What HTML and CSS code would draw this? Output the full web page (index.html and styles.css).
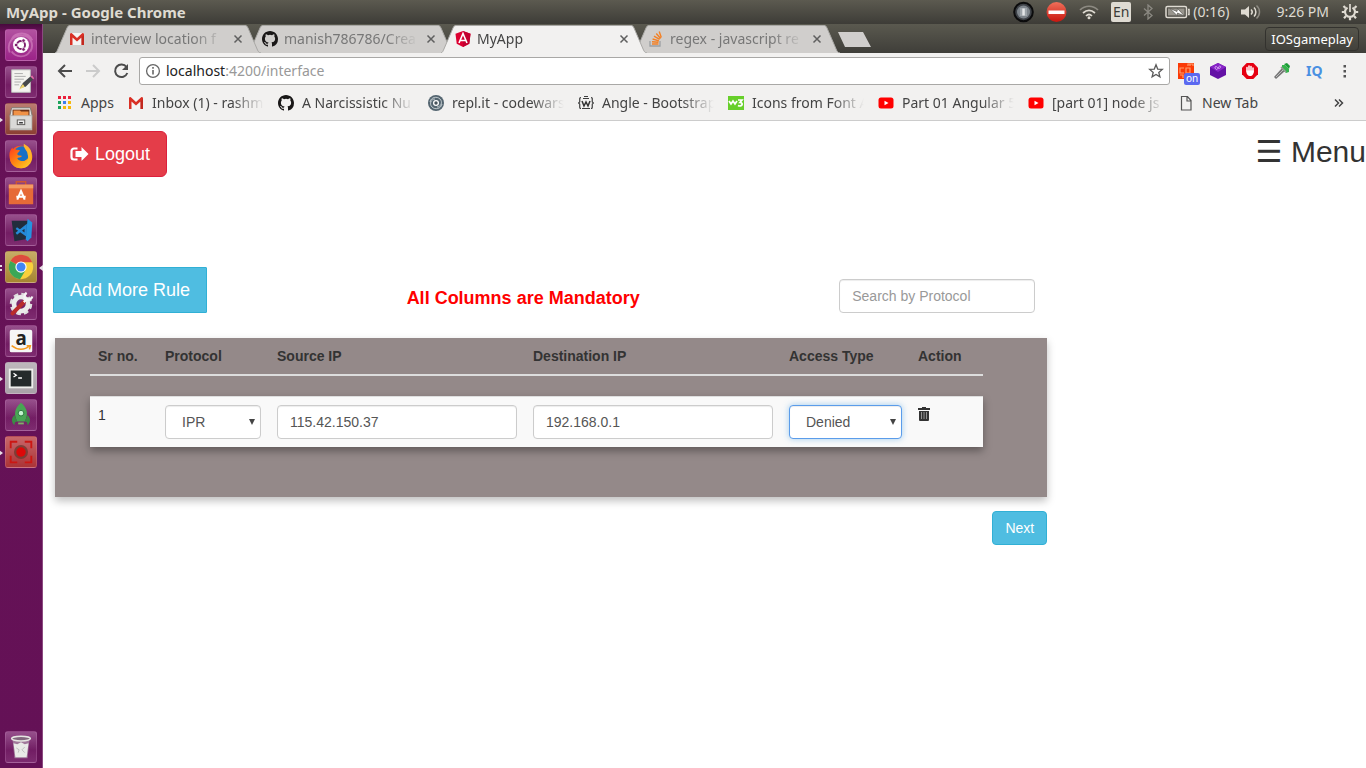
FILE: index.html
```html
<!DOCTYPE html>
<html lang="en">
<head>
<meta charset="utf-8">
<meta name="viewport" content="width=device-width, initial-scale=1">
<title>MyApp</title>
<link rel="stylesheet" href="styles.css">
</head>
<body>
<svg class="sprite" aria-hidden="true">
  <defs>
    <linearGradient id="fox" x1="0" y1="0" x2="1" y2="1"><stop offset="0" stop-color="#ff3b1f"/><stop offset=".5" stop-color="#ff8a12"/><stop offset="1" stop-color="#ffd52b"/></linearGradient>
    <linearGradient id="stop-red" x1="0" y1="0" x2="0" y2="1"><stop offset="0" stop-color="#f0705a"/><stop offset="1" stop-color="#c8160f"/></linearGradient>
  </defs>
  <symbol id="gmail" viewBox="0 0 16 16"><path fill="#f4f4f4" d="M1 2h14v12H1z"/><path fill="#d93025" d="M1 14V2.600L2.600 2 8 7l5.400-5 1.600.6V14h-2.500V6.400L8 10.600 3.500 6.400V14z"/><path fill="#b3231b" d="M12.500 6.400L15 4v10h-2.500z" opacity=".6"/></symbol>
  <symbol id="github" viewBox="0 0 16 16"><path fill="#191717" fill-rule="evenodd" d="M8 0C3.580 0 0 3.580 0 8c0 3.540 2.290 6.530 5.470 7.590.4.070.55-.17.55-.38 0-.19-.01-.82-.01-1.490-2.010.37-2.530-.49-2.690-.94-.09-.23-.48-.94-.82-1.130-.28-.15-.68-.52-.01-.53.63-.01 1.080.58 1.230.82.72 1.210 1.870.87 2.330.66.07-.52.28-.87.51-1.070-1.780-.2-3.640-.89-3.640-3.950 0-.87.31-1.590.82-2.150-.08-.2-.36-1.020.08-2.120 0 0 .67-.21 2.200.82a7.400 7.400 0 0 1 4 0c1.530-1.040 2.200-.82 2.200-.82.44 1.100.16 1.920.08 2.120.51.56.82 1.270.82 2.150 0 3.070-1.870 3.750-3.650 3.950.29.25.54.73.54 1.480 0 1.070-.01 1.930-.01 2.200 0 .21.15.46.55.38A8.010 8.010 0 0 0 16 8c0-4.420-3.580-8-8-8z"/></symbol>
  <symbol id="youtube" viewBox="0 0 16 16"><rect x=".5" y="2.500" width="15" height="11" rx="2.500" fill="#f00"/><path d="M6.500 5.700v4.600L10.500 8z" fill="#fff"/></symbol>
  <symbol id="close" viewBox="0 0 10 10"><path d="M1.500 1.500l7 7M8.500 1.500l-7 7" stroke="#5f5f5f" stroke-width="1.500"/></symbol>
  <symbol id="tab-shape" viewBox="0 0 206 28"><path d="M0 28C1.500 27.500 2 26 2.500 25L12 3C13 1 13.500.5 15 .5H190c1.500 0 2 .5 3 2.500l9.500 22c.5 1 1 2.500 3.500 3" fill="currentColor" stroke="#a9a8a5"/></symbol>
  <symbol id="marker" viewBox="0 0 4 6"><path d="M0 0l4 3-4 3z" fill="#e8dfe6"/></symbol>
  <symbol id="caret" viewBox="0 0 6 6"><path d="M0 0h6L3 6z" fill="#444"/></symbol>
</svg>

<header class="panel">
  <span class="panel-title">MyApp - Google Chrome</span>
  <div class="indicators">
    <svg width="21" height="22" viewBox="0 0 21 22"><circle cx="10.500" cy="11" r="9.300" fill="#3e4248" stroke="#0b0b0c" stroke-width="2"/><circle cx="10.500" cy="11" r="6.500" fill="#7e858c"/><path d="M7 7h7v8H7z" fill="#9da4aa"/><path d="M9.300 7.500h2.500v7H9.300z" fill="#e4e6e8"/></svg>
    <svg width="21" height="22" viewBox="0 0 21 22"><circle cx="10.500" cy="11" r="10" fill="url(#stop-red)"/><path d="M2.500 9.500h16v3.500h-16z" fill="#fff"/></svg>
    <svg width="20" height="16" viewBox="0 0 20 16" fill="none" stroke-width="1.700"><path d="M1 6C6 1 14 1 19 6" stroke="#8d8a82"/><path d="M4 9c4-3.500 8-3.500 12 0M7 12c2-2 4-2 6 0" stroke="#dfdbd2"/><circle cx="10" cy="13.800" r="1.500" fill="#dfdbd2"/></svg>
    <span class="lang">En</span>
    <svg width="10" height="16" viewBox="0 0 10 16"><path d="M1 4.500l8 7-4 3.500V1l4 3.500-8 7" fill="none" stroke="#8b8982" stroke-width="1.300"/></svg>
    <div class="battery">
      <svg width="25" height="14" viewBox="0 0 25 14"><rect x="1" y="1.500" width="20.500" height="11" rx="1.500" fill="none" stroke="#dfdbd2" stroke-width="1.500"/><path d="M3 3.500h16.500v7H3z" fill="#98958d"/><path d="M23 4.500h1v5h-1" fill="none" stroke="#dfdbd2" stroke-width="1.500"/><path d="M5 3.500l7 3 .5-3 7 7.500-7-3-.5 2.500z" fill="#fff" stroke="#44433d" stroke-width=".6"/></svg>
      <span>(0:16)</span>
    </div>
    <svg width="20" height="16" viewBox="0 0 20 16"><path d="M0 5.500h4L8 2v12l-4-3.500H0z" fill="#dfdbd2"/><g fill="none" stroke="#dfdbd2" stroke-width="1.500"><path d="M10 5.500c1.500 1.500 1.500 3.500 0 5M13 3.500c2.500 2.500 2.500 6.500 0 9"/><path d="M15.500 1.500c4 3.500 4 9.500 0 13" stroke="#8d8a82"/></g></svg>
    <time class="clock">9:26 PM</time>
    <svg width="18" height="18" viewBox="0 0 18 18" fill="none" stroke="#dfdbd2"><path d="M6.500 4.600a5 5 0 1 0 5 0" stroke-width="2.200"/><path d="M9 1v8" stroke-width="1.700"/><path d="M4.500 5L2.500 3M13.500 5l2-2M3.500 9H.8M14.500 9h2.700M5 13l-2 2.200M13 13l2 2.200M9 14.500v2.700" stroke-width="2.200"/></svg>
  </div>
</header>

<div class="desktop">
  <nav class="launcher" aria-label="Launcher">
    <button class="tile tile-dash" aria-label="Dash"><svg viewBox="0 0 32 32"><path d="M4 24C0 14 8 5 17 6c10 0 13 10 9 17M6 10c4-8 17-9 22 1M26 22c-5 9-16 7-20 1" fill="none" stroke="#d889c4" stroke-width="2" opacity=".6"/><circle cx="16" cy="16" r="8.500" fill="#fff"/><circle cx="16" cy="16" r="4.300" fill="none" stroke="#7c1d6c" stroke-width="2"/><g fill="#7c1d6c" stroke="#fff" stroke-width=".8"><circle cx="10.800" cy="16" r="1.900"/><circle cx="18.700" cy="11.300" r="1.900"/><circle cx="18.700" cy="20.700" r="1.900"/></g></svg></button>
    <button class="tile" aria-label="Text editor"><svg viewBox="0 0 32 32"><path d="M6 3h20v24H6z" fill="#f3f3ef" stroke="#bbb"/><path d="M9 7h9M9 10h12M9 13h10M9 16h7M9 19h5" stroke="#aaa"/><path d="M15 22l3-5 8-7 3 3-8 8z" fill="#45484b"/><path d="M14 24l4-6 2 3z" fill="#efd469"/><path d="M26 10l2-1 2 3-1 1z" fill="#e46ca7"/></svg></button>
    <button class="tile tile-files" aria-label="Files"><svg class="mark" viewBox="0 0 4 6"><use href="#marker"/></svg><svg viewBox="0 0 32 32"><path d="M6 4h20l2 9H4z" fill="#e3e1dd" stroke="#7b7772"/><path d="M7 6h18v7H7z" fill="#6b3115"/><path d="M8 7h7l1 1h8v5H8z" fill="#f09246"/><path d="M4 12h24v16H4z" fill="#b9b8b5"/><path d="M5 13h22v13H5z" fill="#dadad8"/><rect x="12" y="17" width="8" height="5" fill="#eee" stroke="#5c5a57"/><path d="M14 20h4" stroke="#333" stroke-width="1.500"/></svg></button>
    <button class="tile" aria-label="Firefox"><svg viewBox="0 0 32 32"><circle cx="16" cy="17" r="12" fill="url(#fox)"/><circle cx="17" cy="13.500" r="8" fill="#1770c8"/><path d="M4 17C3 12 5 9 7 7l1 4c2-2 5-2 7-1-1 2-3 2-3 4 1 2 4 1 5 2-1 2-4 1-5 3 3 4 11 4 14-3 2 7-3 13-10 13S4 24 4 17z" fill="url(#fox)"/><path d="M19 3c7 4 9 8 8 13-1 5-3 7-6 9 3-5 3-8 2-11 0-4-5-6-4-11z" fill="#ffb52c"/></svg></button>
    <button class="tile" aria-label="Software"><svg viewBox="0 0 32 32"><path d="M11 9V4h10v5" fill="none" stroke="#cf5631" stroke-width="1.500"/><path d="M3 7h26v21H3z" fill="#e66a37"/><path d="M3 7h26v4H3z" fill="#f49b62"/><path d="M12 23l4-9 4 9M11 20h10" fill="none" stroke="#fff" stroke-width="2.200"/></svg></button>
    <button class="tile" aria-label="Code editor"><svg viewBox="0 0 32 32"><path d="M6 6h19v19L9 28z" fill="#222d3d"/><path d="M23 4l5 4-1 16-4 4-2-2z" fill="#2593e0"/><path d="M11 20l10-8v9l-10-7" fill="none" stroke="#258ada" stroke-width="2.500"/></svg></button>
    <button class="tile tile-chrome" aria-label="Chrome"><svg class="mark" viewBox="0 0 4 6"><path d="M0 0h3v2H0zM0 4h3v2H0z" fill="#e8dfe6"/></svg><svg class="mark mark-active" viewBox="0 0 4 6"><path d="M4 0L0 3l4 3z" fill="#e8dfe6"/></svg><svg viewBox="0 0 32 32"><circle cx="16" cy="16" r="13" fill="#f9cf3b"/><path d="M16 16L4.700 9.500A13 13 0 0 1 28 11H16z" fill="#dd4b3e"/><path d="M16 16L4.700 9.500A13 13 0 0 0 15 29l5.500-9z" fill="#3aa757"/><circle cx="16" cy="16" r="6" fill="#fff"/><circle cx="16" cy="16" r="4.800" fill="#4285f4"/></svg></button>
    <button class="tile" aria-label="Settings"><svg viewBox="0 0 32 32"><circle cx="16" cy="16" r="10.500" fill="none" stroke="#dedede" stroke-width="3" stroke-dasharray="5 3.250"/><circle cx="16" cy="16" r="7.500" fill="none" stroke="#ebebeb" stroke-width="5"/><path d="M7 26l12-12" stroke="#b92c2c" stroke-width="4.500" stroke-linecap="round"/><path d="M19 14l4-4M22 4c-3 2-3 6 0 7s5 0 6-3" stroke="#f5f5f5" stroke-width="2.500" fill="none"/></svg></button>
    <button class="tile" aria-label="Amazon"><svg viewBox="0 0 32 32"><rect x="4" y="4" width="24" height="24" rx="2" fill="#f6f6f6"/><text x="16" y="20" text-anchor="middle" class="amazon-letter">a</text><path d="M6 21c6 5 14 5 19 0M22 21h4l-1 4" fill="none" stroke="#f49a20" stroke-width="1.600"/></svg></button>
    <button class="tile tile-terminal" aria-label="Terminal"><svg class="mark" viewBox="0 0 4 6"><use href="#marker"/></svg><svg viewBox="0 0 32 32"><path d="M3 6h26v21H3z" fill="#eeeeec"/><path d="M5 8h22v17H5z" fill="#242a2b"/><path d="M8 11l3 2-3 2M13 16h4" fill="none" stroke="#fff" stroke-width="1.400"/></svg></button>
    <button class="tile" aria-label="Rocket"><svg viewBox="0 0 32 32"><path d="M16 3c7 6 8 12 4 20h-8C8 15 9 9 16 3z" fill="#48a554"/><path d="M9 16c-4 4-3 8 0 11 0-3 1-4 3-4zM23 16c4 4 3 8 0 11 0-3-1-4-3-4z" fill="#3b8b45"/><circle cx="16" cy="14" r="3" fill="#c5f3d0" stroke="#27723a"/><path d="M13 25h6" stroke="#7eaf69" stroke-width="2"/></svg></button>
    <button class="tile tile-recorder" aria-label="Screen recorder"><svg class="mark" viewBox="0 0 4 6"><use href="#marker"/></svg><svg viewBox="0 0 32 32"><path d="M5 12V5h7M20 5h7v7M27 20v7h-7M12 27H5v-7" fill="none" stroke="#cb1713" stroke-width="2"/><circle cx="16" cy="16" r="7.500" fill="#71392f" opacity=".8"/><circle cx="16" cy="16" r="5" fill="#dd0808"/></svg></button>
    <button class="tile tile-trash" aria-label="Trash"><svg viewBox="0 0 32 32"><path d="M7 8h18l-2 20H9z" fill="#b7a9b5" opacity=".6"/><path d="M8 12l4 1 4-2 4 2 4-1-2 15H10z" fill="#e9e9e7"/><path d="M11 17l3 2-1 3M20 16l-3 3 3 3" fill="none" stroke="#bbb"/><ellipse cx="16" cy="7" rx="10" ry="2.500" fill="#82667d" stroke="#e6e6e2" stroke-width="1.600"/></svg></button>
  </nav>

  <div class="window">
    <div class="tabstrip">
      <div class="tab tab-1"><svg class="tab-bg"><use href="#tab-shape"/></svg><svg class="icon"><use href="#gmail"/></svg><span class="tab-title fade">interview location f</span><button class="tab-close" aria-label="Close tab"><svg><use href="#close"/></svg></button></div>
      <div class="tab"><svg class="tab-bg"><use href="#tab-shape"/></svg><svg class="icon"><use href="#github"/></svg><span class="tab-title fade">manish786786/Crea</span><button class="tab-close" aria-label="Close tab"><svg><use href="#close"/></svg></button></div>
      <div class="tab tab-active"><svg class="tab-bg"><use href="#tab-shape"/></svg><svg class="icon" viewBox="0 0 16 16"><path d="M8 0l7.500 2.700-1.200 10L8 16l-6.300-3.300L.5 2.700z" fill="#dd0031"/><path d="M8 0l7.500 2.700-1.200 10L8 16z" fill="#c3002f"/><path d="M4 12l4-9.500L12 12M5.500 9.500h5" fill="none" stroke="#fff" stroke-width="1.600"/></svg><span class="tab-title fade">MyApp</span><button class="tab-close" aria-label="Close tab"><svg><use href="#close"/></svg></button></div>
      <div class="tab"><svg class="tab-bg"><use href="#tab-shape"/></svg><svg class="icon" viewBox="0 0 16 16"><path d="M2 10v5h10v-5" fill="none" stroke="#9b9fa3" stroke-width="1.300"/><path d="M4 13h6.500M4 10.700l6.500.6M4.600 8l6.300 1.800M6 5.200l5.600 3.200M8.300 2.500l4.300 5M11.200.5l2.100 6" stroke="#f48024" stroke-width="1.400"/></svg><span class="tab-title fade">regex - javascript re</span><button class="tab-close" aria-label="Close tab"><svg><use href="#close"/></svg></button></div>
      <button class="new-tab" aria-label="New tab"></button>
      <button class="profile">IOSgameplay</button>
    </div>

    <div class="toolbar">
      <div class="nav-buttons">
        <button aria-label="Back"><svg viewBox="0 0 16 16"><path d="M15 8H2M8 2L2 8l6 6" fill="none" stroke="#4c4c4c" stroke-width="2"/></svg></button>
        <button aria-label="Forward"><svg viewBox="0 0 16 16"><path d="M1 8h13M8 2l6 6-6 6" fill="none" stroke="#cbcbcb" stroke-width="2"/></svg></button>
        <button aria-label="Reload"><svg viewBox="0 0 16 16"><path d="M13.500 4A6.300 6.300 0 1 0 14.300 10" fill="none" stroke="#4c4c4c" stroke-width="2"/><path d="M15 1v6H9z" fill="#4c4c4c"/></svg></button>
      </div>
      <div class="omnibox">
        <svg class="info" viewBox="0 0 16 16"><circle cx="8" cy="8" r="6.400" fill="none" stroke="#666" stroke-width="1.300"/><path d="M8 7v4.500M8 4v1.700" stroke="#666" stroke-width="1.600"/></svg>
        <span class="url">localhost<span class="url-path">:4200/interface</span></span>
        <svg class="star" viewBox="0 0 16 16"><path d="M8 1.800l1.700 4.300 4.600.3-3.500 3 1.100 4.400L8 11.400l-3.900 2.400 1.100-4.400-3.500-3 4.600-.3z" fill="none" stroke="#5a5a5a" stroke-width="1.300"/></svg>
      </div>
      <div class="extensions">
        <button class="ext" aria-label="Extension"><svg viewBox="0 0 16 16"><path d="M0 0h16v16H0z" fill="#fb3a06"/><path d="M6 5H2v5h4M8 5h4v5H8zM10 3V1h5v2M12 1v2M2 12h3v3" fill="none" stroke="#ff9d6c" stroke-width="1.200"/></svg><span class="badge">on</span></button>
        <button class="ext" aria-label="Extension"><svg viewBox="0 0 16 16"><path d="M8 0l8 4v8l-8 4-8-4V4z" fill="#6411a5"/><path d="M8 0l8 4-8 5-8-5z" fill="#8825c7"/><path d="M5 4c2-2 3 3 5 1s-1-3-2 0-3 1-3-1z" fill="none" stroke="#d9a6f5"/></svg></button>
        <button class="ext" aria-label="Ad blocker"><svg viewBox="0 0 16 16"><path d="M4.700 0h6.600L16 4.700v6.600L11.300 16H4.700L0 11.300V4.700z" fill="#e60012"/><path d="M5 8V4.500M7 8V3M9 8V3.500M11 9V5" stroke="#fff" stroke-width="1.500" stroke-linecap="round"/><path d="M4.300 7.500h7.400C12 11 10.500 13 8 13 6 13 4.500 11 4.300 9z" fill="#fff"/></svg></button>
        <button class="ext" aria-label="Microphone"><svg viewBox="0 0 16 16"><path d="M0 14l8-9 3 3-9 8z" fill="#777"/><path d="M2 14l7-7" stroke="#bbb"/><path d="M10 1l3-1 3 3-1 3z" fill="#1c9b36"/><path d="M8 2h3l4 4v3l-3 1-4-4z" fill="#35b44b"/><path d="M7 4l5 5" stroke="#999" stroke-width="1.500"/></svg></button>
        <button class="ext ext-iq">IQ</button>
        <button class="ext" aria-label="Chrome menu"><svg viewBox="0 0 16 16"><path d="M5.500 2H8v2.500H5.500zM5.500 7H8v2.500H5.500zM5.500 12H8v2.500H5.500z" fill="#555"/></svg></button>
      </div>
    </div>

    <nav class="bookmarks" aria-label="Bookmarks">
      <a href="#" class="apps"><svg class="icon" viewBox="0 0 16 16"><path d="M1 1h3v3H1zM6 1h3v3H6zM11 1h3v3h-3z" fill="#ea1f3b"/><path d="M1 6h3v3H1zM1 11h3v3H1z" fill="#1ca35a"/><path d="M6 6h3v3H6z" fill="#3d7ef0"/><path d="M11 6h3v3h-3zM6 11h3v3H6zM11 11h3v3h-3z" fill="#f6b90c"/></svg><span>Apps</span></a>
      <a href="#"><svg class="icon"><use href="#gmail"/></svg><span class="fade">Inbox (1) - rashm</span></a>
      <a href="#"><svg class="icon"><use href="#github"/></svg><span class="fade">A Narcissistic Nu</span></a>
      <a href="#"><svg class="icon" viewBox="0 0 16 16"><circle cx="8" cy="8" r="8" fill="#546570"/><path d="M2 7c1-5 7-6 10-3M14 9c-1 5-7 6-10 3M12 4c3 3 1 8-3 8M4 12C1 9 3 4 7 4" fill="none" stroke="#dde3e6" stroke-width=".8"/><circle cx="8" cy="8" r="3" fill="#fff"/><circle cx="8" cy="8" r="1.700" fill="#47545c"/></svg><span class="fade">repl.it - codewars</span></a>
      <a href="#"><svg class="icon" viewBox="0 0 16 16"><path d="M3 2.500C1 2.500 2 5 1.700 7L.5 8l1.200 1C2 11 1 13.500 3 13.500M13 2.500c2 0 1 2.500 1.300 4.500l1.200 1-1.200 1c-.3 2 .7 4.500-1.300 4.500M5 3.500h6M6 1.500h4M4 13.500h8" fill="none" stroke="#3e3e3e" stroke-width="1.200"/><path d="M4 6l2 5 2-4 2 4 2-5" fill="none" stroke="#333" stroke-width="1.500"/></svg><span class="fade">Angle - Bootstrap</span></a>
      <a href="#"><svg class="icon" viewBox="0 0 16 16"><path d="M0 1h16v14H0z" fill="#67cf2a"/><path d="M1 6l2 3 2-3 2 3 2-3M10 5h4l-2 2.500c4 0 2 5-2 3" fill="none" stroke="#fff" stroke-width="1.700"/></svg><span class="fade">Icons from Font A</span></a>
      <a href="#"><svg class="icon"><use href="#youtube"/></svg><span class="fade">Part 01 Angular 5</span></a>
      <a href="#"><svg class="icon"><use href="#youtube"/></svg><span class="fade">[part 01] node js</span></a>
      <a href="#"><svg class="icon" viewBox="0 0 16 16"><path d="M3.500 1.500h6l3.500 4v9.500H3.500zM9 1.500V6h4" fill="none" stroke="#555" stroke-width="1.200"/></svg><span>New Tab</span></a>
      <button class="more" aria-label="More bookmarks"><svg viewBox="0 0 10 10"><path d="M1 1.500L4.500 5 1 8.500M5 1.500L8.500 5 5 8.500" fill="none" stroke="#444" stroke-width="1.500"/></svg></button>
    </nav>

    <main class="page">
      <div class="page-top">
        <button class="btn btn-danger btn-lg"><svg class="signout" viewBox="0 0 19 16"><path d="M7.500 2.500H4A2.500 2.500 0 0 0 1.500 5v6A2.500 2.500 0 0 0 4 13.500h3.500" fill="none" stroke="#fff" stroke-width="2.200"/><path d="M11.500 1l7 7-7 7v-4H5.500V5h6z" fill="#fff"/></svg>Logout</button>
        <button class="menu-toggle">☰ Menu</button>
      </div>

      <section class="rules">
        <div class="rules-head">
          <button class="btn btn-info btn-lg btn-square">Add More Rule</button>
          <p class="notice">All Columns are Mandatory</p>
          <input class="control search" type="text" placeholder="Search by Protocol" aria-label="Search by Protocol">
        </div>
        <div class="rules-box">
          <table class="rules-table">
            <colgroup><col class="c-no"><col class="c-protocol"><col class="c-ip"><col class="c-ip"><col class="c-access"><col></colgroup>
            <thead>
              <tr><th>Sr no.</th><th>Protocol</th><th>Source IP</th><th>Destination IP</th><th>Access Type</th><th>Action</th></tr>
            </thead>
            <tbody>
              <tr>
                <td>1</td>
                <td><div class="select"><select class="control" aria-label="Protocol"><option>IPR</option><option>TCP</option><option>UDP</option></select><svg class="caret"><use href="#caret"/></svg></div></td>
                <td><input class="control" type="text" value="115.42.150.37" aria-label="Source IP"></td>
                <td><input class="control" type="text" value="192.168.0.1" aria-label="Destination IP"></td>
                <td><div class="select"><select class="control is-focused" aria-label="Access Type"><option>Denied</option><option>Allowed</option></select><svg class="caret"><use href="#caret"/></svg></div></td>
                <td><button class="delete" aria-label="Delete rule"><svg viewBox="0 0 12 14"><path d="M4 0h4v1h4v2H0V1h4zM1 4h10v9a1 1 0 0 1-1 1H2a1 1 0 0 1-1-1z" fill="#333"/><path d="M3.500 5v7M6 5v7M8.500 5v7" stroke="#aaa" stroke-width=".8"/></svg></button></td>
              </tr>
            </tbody>
          </table>
        </div>
        <div class="rules-foot"><button class="btn btn-info">Next</button></div>
      </section>
    </main>
  </div>
</div>
</body>
</html>
```
FILE: styles.css
```css
* { box-sizing: border-box; }

body {
  margin: 0;
  min-height: 100vh;
  display: flex;
  flex-direction: column;
  background: #fff;
  color: #333;
  font: 14px/20px "Liberation Sans", "DejaVu Sans", sans-serif;
}

button {
  margin: 0;
  padding: 0;
  border: 0;
  background: none;
  color: inherit;
  font: inherit;
  cursor: pointer;
}

svg { display: block; flex: none; }
.sprite { position: absolute; width: 0; height: 0; }
.icon { width: 16px; height: 16px; }

.fade {
  min-width: 0;
  white-space: nowrap;
  -webkit-mask-image: linear-gradient(to left, transparent, #000 32px);
  mask-image: linear-gradient(to left, transparent, #000 32px);
}

/* Desktop panel */
.panel {
  display: flex;
  align-items: center;
  justify-content: space-between;
  height: 24px;
  padding: 0 7px 0 6px;
  background: linear-gradient(#5c5a50, #3d3c37);
  color: #dfdbd2;
  font: 14px/20px "Noto Sans", sans-serif;
}
.panel-title { font-size: 15px; font-weight: bold; }
.indicators { display: flex; align-items: center; gap: 12px; }
.lang {
  width: 20px;
  height: 20px;
  border-radius: 2px;
  background: #dfdbd2;
  color: #3c3b37;
  text-align: center;
}
.battery { display: flex; align-items: center; gap: 3px; }
.clock { padding-left: 3px; }

.desktop { display: flex; flex: 1; }

/* Launcher */
.launcher {
  display: flex;
  flex: none;
  flex-direction: column;
  align-items: center;
  gap: 5px;
  width: 43px;
  padding: 5px 0;
  border-right: 1px solid #8b4a80;
  background: linear-gradient(#48093d, #671257 8px, #641156);
}
.tile {
  position: relative;
  width: 32px;
  height: 32px;
  border: 1px solid rgba(230, 170, 220, .2);
  border-radius: 3px;
  background: linear-gradient(rgba(225, 175, 220, .4), rgba(215, 120, 200, .12) 60%, rgba(225, 150, 215, .2));
}
.tile > svg { width: 30px; height: 30px; }
.tile-dash { background: linear-gradient(#b252a0, #9b2388); }
.tile-files { background: linear-gradient(#bb7b70, #8b3f33); }
.tile-chrome { background: linear-gradient(#c7ac66, #a68531); }
.tile-terminal { background: linear-gradient(#bdb6bc, #a9a2a8); }
.tile-recorder { background: linear-gradient(#c7676a, #ab3437); }
.tile-trash { margin-top: auto; }
.tile > .mark {
  position: absolute;
  top: 13px;
  left: -7px;
  width: 4px;
  height: 6px;
}
.tile > .mark-active { left: 33px; }
.amazon-letter { font: bold 20px "Noto Sans", sans-serif; fill: #222; }

/* Browser chrome */
.window { flex: 1; min-width: 0; }
.tabstrip,
.toolbar,
.bookmarks { font: 14px/20px "Noto Sans", sans-serif; }

.tabstrip {
  display: flex;
  align-items: flex-end;
  height: 29px;
  padding: 0 7px 0 12px;
  background: linear-gradient(#5a594f, #3f3e39);
}
.tab {
  position: relative;
  z-index: 1;
  display: flex;
  flex: none;
  align-items: center;
  width: 206px;
  height: 28px;
  margin-right: -13px;
  padding: 0 18px 0 14px;
  color: #d0cecc;
}
.tab-1 { z-index: 2; }
.tab-active { z-index: 3; color: #f2f1f0; }
.tab-bg { position: absolute; inset: 0; width: 206px; height: 28px; }
.tab .icon { position: relative; }
.tab-title {
  position: relative;
  flex: 1;
  margin: 0 8px 0 6px;
  color: #777;
}
.tab-active .tab-title { color: #444; }
.tab-close { position: relative; }
.tab-close svg { width: 10px; height: 10px; }
.new-tab {
  width: 33px;
  height: 15px;
  margin: 0 0 6px 11px;
  background: #d0cecc;
  clip-path: polygon(0 0, 25px 0, 100% 100%, 7px 100%);
}
.profile {
  height: 24px;
  margin: 0 0 2px auto;
  padding: 0 5px;
  border: 1px solid #33322e;
  border-radius: 4px;
  color: #fff;
  font-size: 13px;
}

.toolbar {
  display: flex;
  align-items: center;
  height: 36px;
  padding: 0 12px 0 14px;
  background: #f2f1f0;
}
.nav-buttons { display: flex; gap: 12px; padding-right: 10px; }
.nav-buttons svg { width: 16px; height: 16px; }
.omnibox {
  display: flex;
  flex: 1;
  align-items: center;
  gap: 5px;
  height: 28px;
  padding: 0 5px;
  border: 1px solid #a9a8a6;
  border-radius: 3px;
  background: #fff;
}
.info,
.star { width: 16px; height: 16px; }
.url { flex: 1; color: #222; }
.url-path { color: #999; }
.extensions { display: flex; gap: 16px; padding-left: 8px; }
.ext { position: relative; width: 16px; height: 16px; line-height: 16px; }
.ext svg { width: 16px; height: 16px; }
.badge {
  position: absolute;
  top: 10px;
  left: 6px;
  width: 16px;
  height: 12px;
  border-radius: 2px;
  background: #5b69f0;
  color: #fff;
  font-size: 10px;
  line-height: 11px;
}
.ext-iq { color: #4a90e2; font-weight: bold; }

.bookmarks {
  display: flex;
  align-items: center;
  gap: 14px;
  height: 32px;
  padding: 0 22px 4px 14px;
  border-bottom: 1px solid #ccc;
  background: #f2f1f0;
}
.bookmarks a {
  display: flex;
  flex: 0 0 136px;
  align-items: center;
  gap: 8px;
  min-width: 0;
  color: #444;
  text-decoration: none;
}
.bookmarks .apps { flex-basis: 57px; }
.bookmarks a:nth-last-of-type(1) { flex: none; }
.bookmarks .fade { flex: 1; }
.more { margin-left: auto; }
.more svg { width: 10px; height: 10px; }

/* Page */
.page { padding-top: 10px; }
.page-top {
  display: flex;
  align-items: flex-start;
  justify-content: space-between;
  padding-left: 10px;
}
.menu-toggle { font-size: 30px; line-height: 42px; }

.btn {
  height: 34px;
  padding: 0 12px;
  border: 1px solid;
  border-radius: 4px;
  color: #fff;
}
.btn-lg {
  display: flex;
  align-items: center;
  height: 46px;
  padding: 0 16px;
  border-radius: 6px;
  font-size: 18px;
}
.btn-square { border-radius: 1px; }
.btn-danger { border-color: #dc1f3c; background: #e43d49; }
.btn-info { border-color: #31b0d5; background: #4fbde1; }
.signout { width: 19px; height: 16px; margin-right: 6px; }

.rules { width: 75%; margin: 90px 0 0 12px; }
.rules-head {
  display: flex;
  align-items: flex-end;
  justify-content: space-between;
  margin: 0 12px 25px -2px;
}
.notice {
  margin: 0 0 5px;
  color: #f00;
  font-size: 18px;
  font-weight: bold;
}
.control {
  display: block;
  width: 100%;
  height: 34px;
  padding: 6px 12px;
  border: 1px solid #ccc;
  border-radius: 4px;
  background: #fff;
  box-shadow: inset 0 1px 1px rgba(0, 0, 0, .075);
  color: #555;
  font: inherit;
  appearance: none;
}
.control::placeholder { color: #999; }
.search { width: 196px; }
select.control { padding: 6px 16px; }
.is-focused {
  border-color: #5b9cea;
  box-shadow: inset 0 1px 1px rgba(0, 0, 0, .075), 0 0 6px rgba(102, 175, 233, .6);
}
.select { position: relative; }
.caret {
  position: absolute;
  top: 14px;
  right: 6px;
  width: 6px;
  height: 6px;
  pointer-events: none;
}

.rules-box {
  padding: 0 64px 50px 35px;
  background: #948989;
  box-shadow: 0 4px 8px rgba(0, 0, 0, .25);
}
.rules-table {
  width: 100%;
  border-spacing: 0;
  table-layout: fixed;
}
.c-no { width: 67px; }
.c-protocol { width: 112px; }
.c-ip { width: 256px; }
.c-access { width: 129px; }
.rules-table th,
.rules-table td {
  padding: 8px;
  text-align: left;
  vertical-align: top;
}
.rules-table th { border-bottom: 2px solid #ddd; }
.rules-table tbody::before {
  content: "";
  display: table-row;
  height: 20px;
}
.rules-table td { border-top: 1px solid #ddd; background: #f9f9f9; }
.rules-table tbody tr { box-shadow: 0 4px 8px rgba(0, 0, 0, .35); }
.delete { padding: 2px 0; }
.delete svg { width: 12px; height: 14px; }
.rules-foot { display: flex; justify-content: flex-end; margin-top: 14px; }
```
